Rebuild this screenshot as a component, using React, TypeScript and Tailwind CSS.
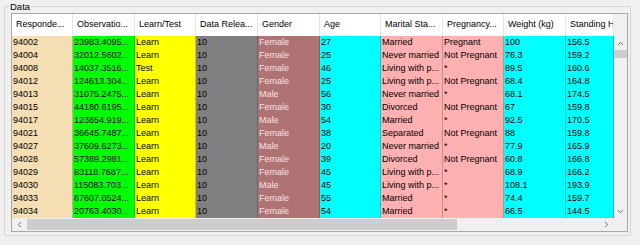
import { ChevronUp, ChevronDown, ChevronLeft, ChevronRight } from 'lucide-react'

interface Column {
  key: string
  title: string
  width: string
  cell: string
}

const columns: Column[] = [
  { key: 'id', title: 'Responde...', width: 'w-[61px]', cell: 'bg-[#f5deb3] text-black' },
  { key: 'obs', title: 'Observatio...', width: 'w-[62px]', cell: 'bg-[#00ff00] text-black' },
  { key: 'lt', title: 'Learn/Test', width: 'w-[61px]', cell: 'bg-[#ffff00] text-black' },
  { key: 'rel', title: 'Data Relea...', width: 'w-[62px]', cell: 'bg-[#808080] text-black' },
  { key: 'gender', title: 'Gender', width: 'w-[62px]', cell: 'bg-[#b07373] text-[#f6e2e2]' },
  { key: 'age', title: 'Age', width: 'w-[61px]', cell: 'bg-[#00ffff] text-black' },
  { key: 'marital', title: 'Marital Sta...', width: 'w-[62px]', cell: 'bg-[#ffb0b0] text-black' },
  { key: 'preg', title: 'Pregnancy...', width: 'w-[61px]', cell: 'bg-[#ffb0b0] text-black' },
  { key: 'weight', title: 'Weight (kg)', width: 'w-[62px]', cell: 'bg-[#00ffff] text-black' },
  { key: 'height', title: 'Standing H', width: 'w-[48px]', cell: 'bg-[#00ffff] text-black' },
]

const rows: string[][] = [
  ['94002', '23983.4095...', 'Learn', '10', 'Female', '27', 'Married', 'Pregnant', '100', '156.5'],
  ['94004', '32012.5602...', 'Learn', '10', 'Female', '25', 'Never married', 'Not Pregnant', '76.3', '159.2'],
  ['94008', '14037.3516...', 'Test', '10', 'Female', '46', 'Living with p...', '*', '89.5', '160.6'],
  ['94012', '124613.304...', 'Learn', '10', 'Female', '25', 'Living with p...', 'Not Pregnant', '68.4', '164.8'],
  ['94013', '31075.2475...', 'Learn', '10', 'Male', '56', 'Never married', '*', '68.1', '174.5'],
  ['94015', '44180.6195...', 'Learn', '10', 'Female', '30', 'Divorced', 'Not Pregnant', '67', '159.8'],
  ['94017', '123854.919...', 'Learn', '10', 'Male', '54', 'Married', '*', '92.5', '170.5'],
  ['94021', '36645.7487...', 'Learn', '10', 'Female', '38', 'Separated', 'Not Pregnant', '88', '159.8'],
  ['94027', '37609.6273...', 'Learn', '10', 'Male', '20', 'Never married', '*', '77.9', '165.9'],
  ['94028', '57389.2981...', 'Learn', '10', 'Female', '39', 'Divorced', 'Not Pregnant', '60.8', '166.8'],
  ['94029', '83118.7687...', 'Learn', '10', 'Female', '45', 'Living with p...', '*', '68.9', '166.2'],
  ['94030', '115083.703...', 'Learn', '10', 'Male', '45', 'Living with p...', '*', '108.1', '193.9'],
  ['94033', '87607.0524...', 'Learn', '10', 'Female', '55', 'Married', '*', '74.4', '159.7'],
  ['94034', '20763.4030...', 'Learn', '10', 'Female', '54', 'Married', '*', '66.5', '144.5'],
]

export default function App() {
  return (
    <div className="h-[245px] w-[640px] overflow-hidden bg-[#f0f0f0] px-[4px] pt-[6px] font-['Liberation_Sans',Arial,sans-serif] text-[9px] text-black">
      <div className="relative h-[230px] w-[627px] rounded-[2px] border border-[#d5d5d5]">
        <span className="absolute -top-[6px] left-[4px] bg-[#f0f0f0] px-[1px] text-[9.5px] leading-[11px]">
          Data
        </span>

        <div className="ml-[6px] mt-[6px] flex h-[219px] w-[617px] flex-col border border-[#a9a9a9] bg-[#f0f0f0]">
          <div className="flex min-h-0 flex-1">
            {/* grid */}
            <div className="flex w-[602px] flex-col overflow-hidden">
              <div className="flex h-[22px] shrink-0 bg-white">
                {columns.map((col) => (
                  <div
                    key={col.key}
                    className={`${col.width} flex shrink-0 items-center overflow-hidden whitespace-nowrap border-r border-[#e5e5e5] pl-[4px]`}
                  >
                    {col.title}
                  </div>
                ))}
              </div>
              {rows.map((row) => (
                <div key={row[0]} className="flex h-[13px] shrink-0">
                  {row.map((value, i) => (
                    <div
                      key={columns[i].key}
                      className={`${columns[i].width} ${columns[i].cell} shrink-0 overflow-hidden whitespace-nowrap border-r border-black/20 pl-[1px] leading-[13px]`}
                    >
                      {value}
                    </div>
                  ))}
                </div>
              ))}
            </div>

            {/* vertical scrollbar */}
            <div className="flex w-[13px] flex-col">
              <div className="h-[22px]" />
              <div className="flex h-[14px] items-center justify-center">
                <ChevronUp size={9} strokeWidth={2.5} className="text-[#606060]" />
              </div>
              <div className="h-[8px] bg-[#cdcdcd]" />
              <div className="flex-1" />
              <div className="flex h-[14px] items-center justify-center">
                <ChevronDown size={9} strokeWidth={2.5} className="text-[#606060]" />
              </div>
            </div>
          </div>

          {/* horizontal scrollbar */}
          <div className="flex h-[13px] shrink-0">
            <div className="flex w-[602px] items-center">
              <div className="flex w-[15px] items-center justify-center">
                <ChevronLeft size={9} strokeWidth={2.5} className="text-[#606060]" />
              </div>
              <div className="h-[11px] w-[430px] bg-[#cdcdcd]" />
              <div className="flex-1" />
              <div className="flex w-[15px] items-center justify-center">
                <ChevronRight size={9} strokeWidth={2.5} className="text-[#606060]" />
              </div>
            </div>
            <div className="w-[13px]" />
          </div>
        </div>
      </div>
    </div>
  )
}
